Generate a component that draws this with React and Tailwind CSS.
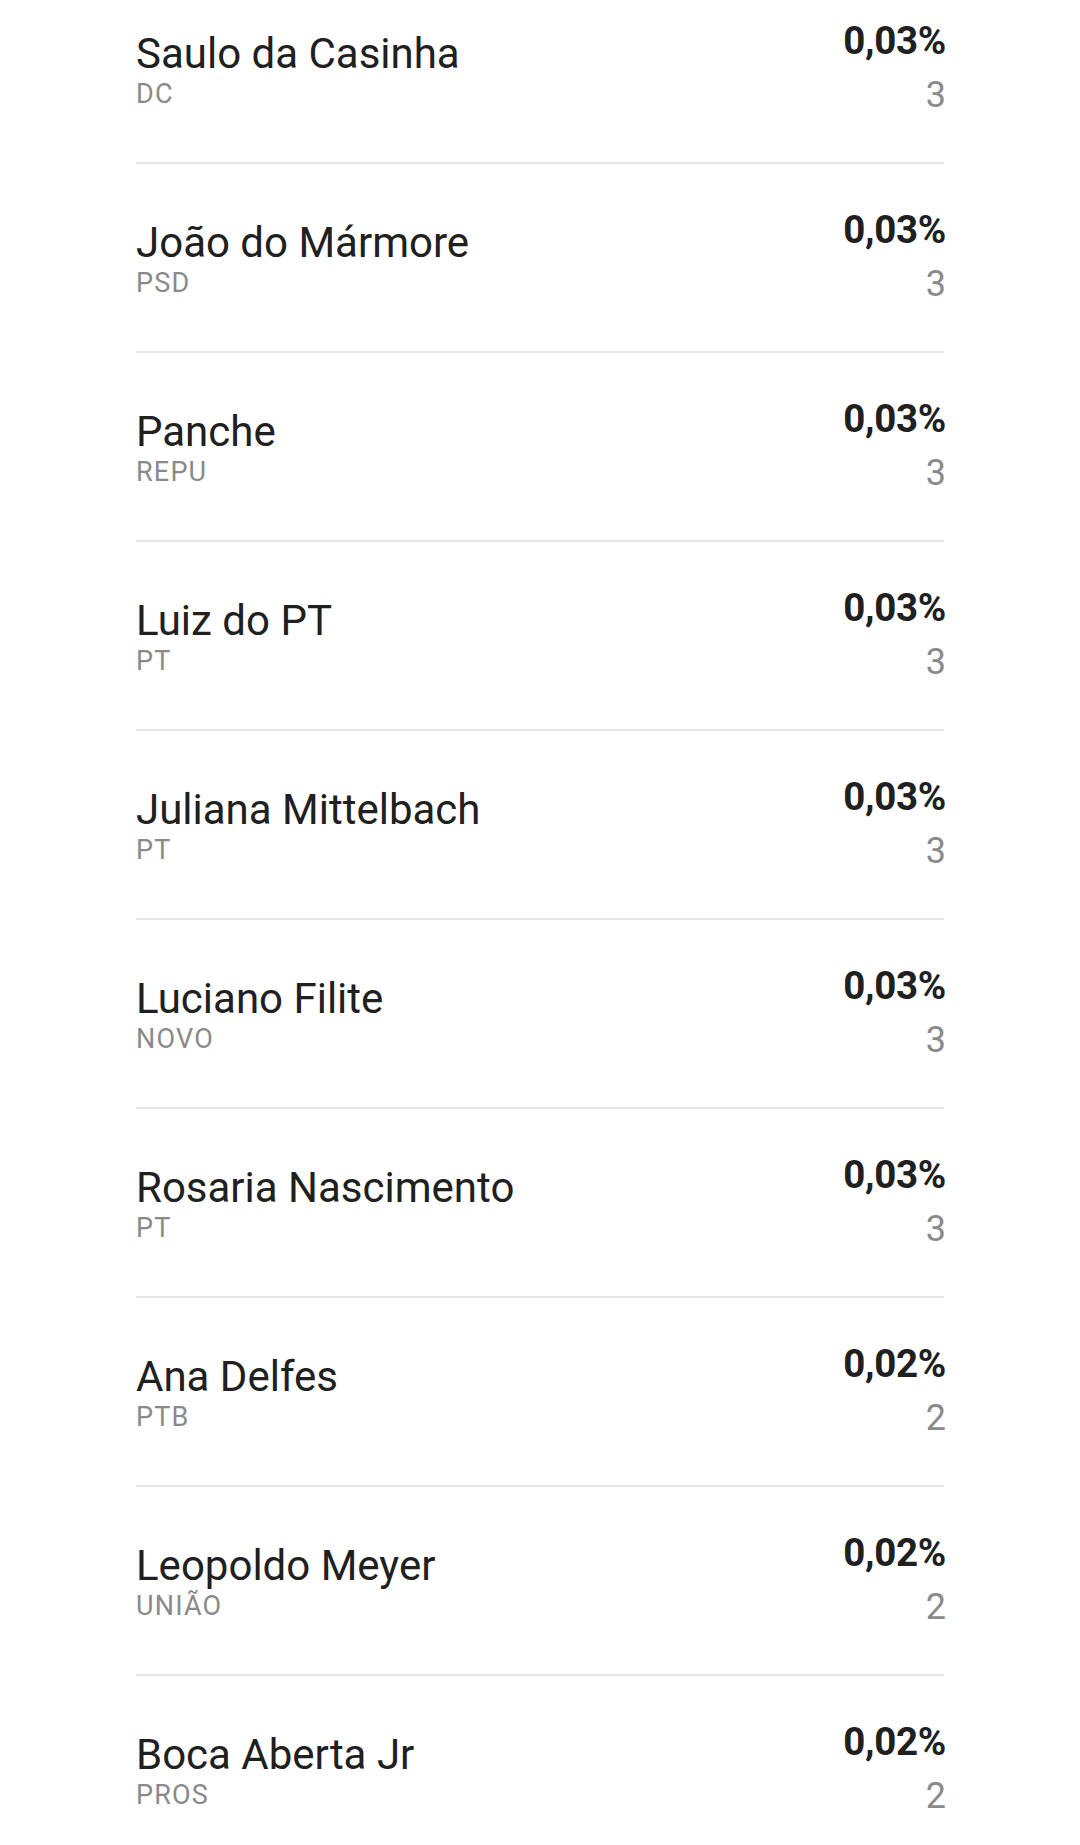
const candidates = [
  { name: "Saulo da Casinha", party: "DC", pct: "0,03%", votes: 3 },
  { name: "João do Mármore", party: "PSD", pct: "0,03%", votes: 3 },
  { name: "Panche", party: "REPU", pct: "0,03%", votes: 3 },
  { name: "Luiz do PT", party: "PT", pct: "0,03%", votes: 3 },
  { name: "Juliana Mittelbach", party: "PT", pct: "0,03%", votes: 3 },
  { name: "Luciano Filite", party: "NOVO", pct: "0,03%", votes: 3 },
  { name: "Rosaria Nascimento", party: "PT", pct: "0,03%", votes: 3 },
  { name: "Ana Delfes", party: "PTB", pct: "0,02%", votes: 2 },
  { name: "Leopoldo Meyer", party: "UNIÃO", pct: "0,02%", votes: 2 },
  { name: "Boca Aberta Jr", party: "PROS", pct: "0,02%", votes: 2 },
];

const CandidateRow = ({ name, party, pct, votes }) => (
  <li className="flex justify-between items-start h-[187px] box-content border-b-2 border-[#e6e6e6]">
    <div className="pt-[55px]">
      <p className="text-[42px] leading-[48px] text-[#202020]">{name}</p>
      <p className="mt-[1px] text-[27px] leading-[31px] tracking-[1.2px] text-[#8a8a8a]">{party}</p>
    </div>
    <div className="pt-[43px] -mr-[2px] text-right">
      <p className="text-[38.5px] leading-[46px] font-bold tracking-[-0.3px] text-[#202020]">{pct}</p>
      <p className="mt-[10px] text-[36px] leading-[42px] text-[#8a8a8a]">{votes}</p>
    </div>
  </li>
);

export default function App() {
  return (
    <div className="w-[1080px] h-[1845px] overflow-hidden bg-white font-['Roboto',sans-serif]">
      <ul className="mt-[-25px] px-[136px]">
        {candidates.map((c) => (
          <CandidateRow key={c.name} {...c} />
        ))}
      </ul>
    </div>
  );
}
